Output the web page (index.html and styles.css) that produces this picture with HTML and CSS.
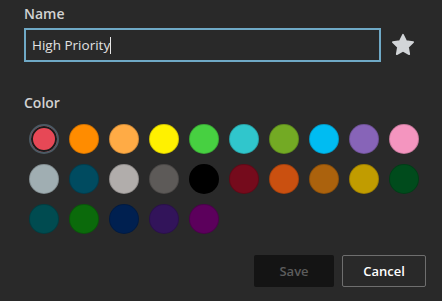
FILE: index.html
```html
<!DOCTYPE html>
<html>
<head>
<meta charset="utf-8">
<link rel="stylesheet" href="styles.css">
</head>
<body>
<div class="dialog">
  <div class="label">Name</div>
  <div class="name-row">
    <div class="input"><span class="value">High Priority</span><span class="caret"></span></div>
    <svg class="star" viewBox="0 0 24 24" width="24" height="24"><path d="M12 1.8l3.1 6.4 7 1-5.1 4.9 1.2 7-6.2-3.3-6.2 3.3 1.2-7L1.9 9.2l7-1z" fill="#d2d5d8" stroke="#d2d5d8" stroke-width="1.8" stroke-linejoin="round"/></svg>
  </div>
  <div class="label color-label">Color</div>
  <div class="swatches">
    <div class="cell"><span class="sw selected" style="background:#e74856"></span></div>
    <div class="cell"><span class="sw" style="background:#ff8c00"></span></div>
    <div class="cell"><span class="sw" style="background:#ffab45"></span></div>
    <div class="cell"><span class="sw" style="background:#fff100"></span></div>
    <div class="cell"><span class="sw" style="background:#47d041"></span></div>
    <div class="cell"><span class="sw" style="background:#30c6cc"></span></div>
    <div class="cell"><span class="sw" style="background:#73aa24"></span></div>
    <div class="cell"><span class="sw" style="background:#00bcf2"></span></div>
    <div class="cell"><span class="sw" style="background:#8764b8"></span></div>
    <div class="cell"><span class="sw" style="background:#f495bf"></span></div>
    <div class="cell"><span class="sw" style="background:#a0aeb2"></span></div>
    <div class="cell"><span class="sw" style="background:#004b60"></span></div>
    <div class="cell"><span class="sw" style="background:#b1adab"></span></div>
    <div class="cell"><span class="sw" style="background:#5d5a58"></span></div>
    <div class="cell"><span class="sw" style="background:#000000"></span></div>
    <div class="cell"><span class="sw" style="background:#750b1c"></span></div>
    <div class="cell"><span class="sw" style="background:#ca5010"></span></div>
    <div class="cell"><span class="sw" style="background:#ab620d"></span></div>
    <div class="cell"><span class="sw" style="background:#c19c00"></span></div>
    <div class="cell"><span class="sw" style="background:#004b1c"></span></div>
    <div class="cell"><span class="sw" style="background:#004b50"></span></div>
    <div class="cell"><span class="sw" style="background:#0b6a0b"></span></div>
    <div class="cell"><span class="sw" style="background:#002050"></span></div>
    <div class="cell"><span class="sw" style="background:#32145a"></span></div>
    <div class="cell"><span class="sw" style="background:#5c005c"></span></div>
  </div>
  <div class="footer">
    <button class="btn save">Save</button>
    <button class="btn cancel">Cancel</button>
  </div>
</div>
</body>
</html>
```
FILE: styles.css
```css
html, body {
  margin: 0;
  padding: 0;
  background: #292929;
  height: 100%;
}
body {
  font-family: "Open Sans", "Noto Sans", sans-serif;
  color: #d6d6d6;
}
.dialog {
  padding: 5px 16px 0 24px;
}
.label {
  font-size: 14px;
  font-weight: 600;
  line-height: 18px;
  color: #d2d2d2;
  height: 18px;
}
.name-row {
  margin-top: 5px;
  display: flex;
  align-items: center;
  gap: 10px;
}
.input {
  box-sizing: border-box;
  width: 357px;
  height: 34px;
  border: 2px solid #6fa9c6;
  padding: 0 6px;
  display: flex;
  align-items: center;
  font-size: 13.5px;
  color: #e2e2e2;
}
.caret {
  display: inline-block;
  width: 1px;
  height: 17px;
  background: #e6e6e6;
}
.star {
  display: block;
}
.color-label {
  margin-top: 32px;
}
.swatches {
  margin-top: 7px;
  display: grid;
  grid-template-columns: repeat(10, 40px);
  grid-auto-rows: 40px;
}
.cell {
  display: flex;
  align-items: center;
  justify-content: center;
}
.sw {
  box-sizing: border-box;
  width: 30px;
  height: 30px;
  border-radius: 50%;
  border: 1px solid rgba(0, 0, 0, 0.18);
}
.sw.selected {
  border: 2px solid #4b5a64;
  box-shadow: inset 0 0 0 2px #1b1b1b;
}
.footer {
  margin-top: 16px;
  display: flex;
  justify-content: flex-end;
  gap: 8px;
}
.btn {
  box-sizing: border-box;
  height: 32px;
  font-family: "Open Sans", "Noto Sans", sans-serif;
  font-size: 13px;
  font-weight: 600;
  border-radius: 2px;
  padding: 0;
}
.save {
  width: 80px;
  background: #141414;
  border: none;
  color: #5c5c5c;
}
.cancel {
  width: 84px;
  background: #292929;
  border: 1px solid #6e6e6e;
  color: #ffffff;
}
```
